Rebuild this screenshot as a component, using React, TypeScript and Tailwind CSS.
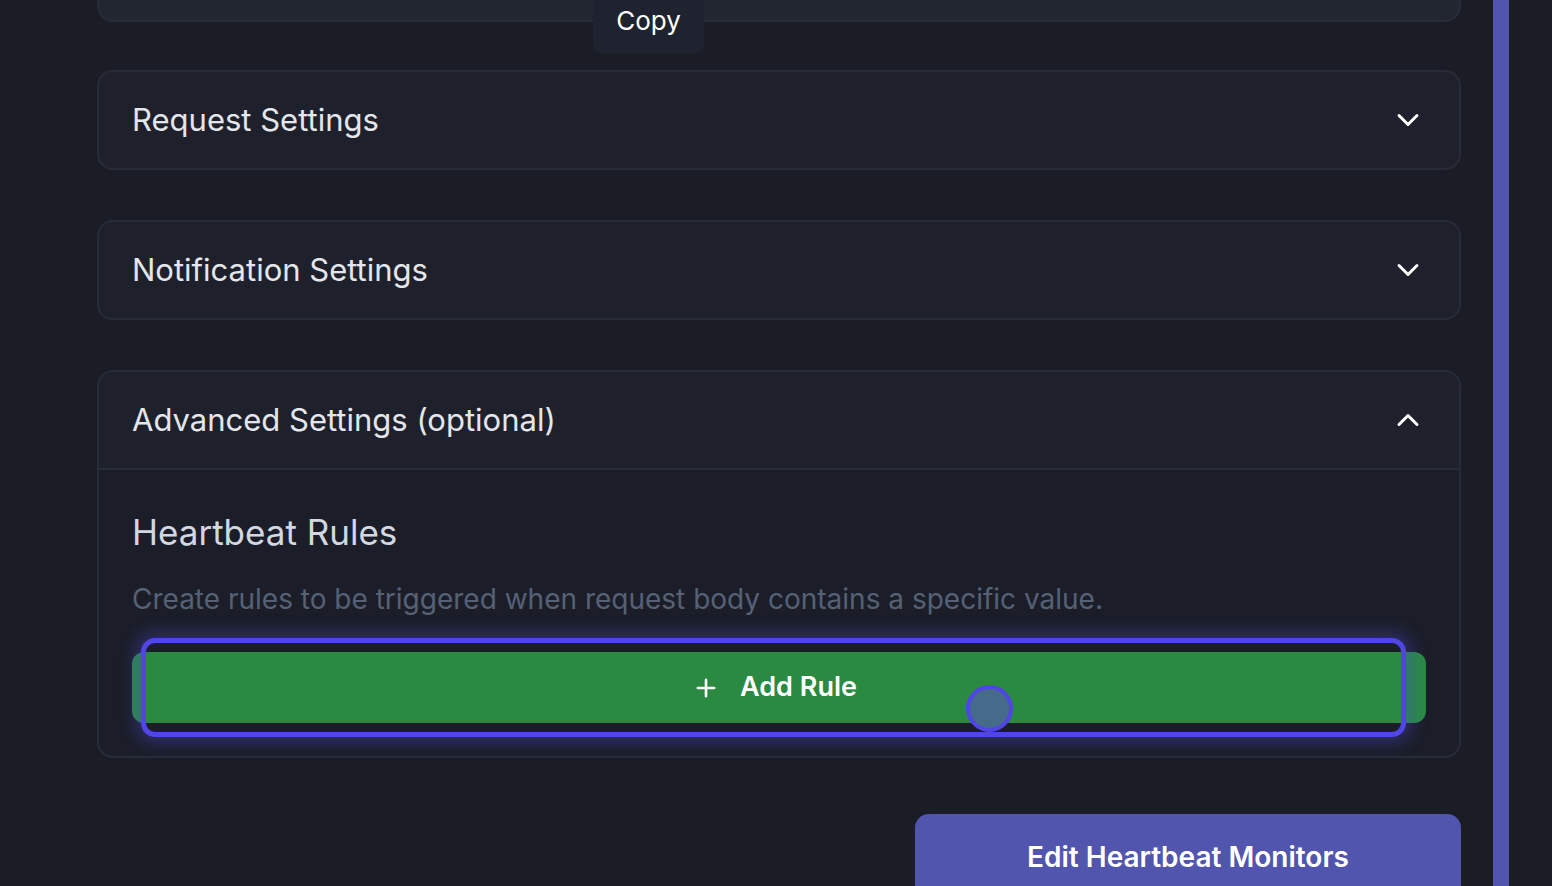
import { ChevronDown, ChevronUp, Plus } from 'lucide-react'

function Section({ title }: { title: string }) {
  return (
    <div className="flex h-[100px] shrink-0 items-center justify-between rounded-2xl border-2 border-[#282c37] bg-[#1e212b] pl-[33px] pr-[33px]">
      <span className="text-[31px] text-[#e4e6eb]">{title}</span>
      <ChevronDown className="h-9 w-9 text-white" strokeWidth={2} />
    </div>
  )
}

export default function App() {
  return (
    <div
      className="flex h-[886px] w-full overflow-hidden bg-[#1a1d26]"
      style={{ fontFamily: 'Inter, "Noto Sans", sans-serif' }}
    >
      <div className="relative ml-[97px] flex w-[1364px] shrink-0 flex-col">
        {/* card cut off at top */}
        <div className="h-[22px] shrink-0 rounded-b-2xl border-2 border-t-0 border-[#282c37] bg-[#222630]" />

        {/* copy tooltip */}
        <div className="absolute left-[496px] top-0 flex h-[53px] w-[111px] items-center justify-center rounded-b-lg bg-[#1f2330] pb-[12px] text-[26px] text-white">
          Copy
        </div>

        <div className="mt-[48px] flex shrink-0 flex-col gap-[50px]">
          <Section title="Request Settings" />
          <Section title="Notification Settings" />

          <div className="shrink-0 rounded-2xl border-2 border-[#282c37] bg-[#1e212b]">
            <div className="flex h-[98px] items-center justify-between border-b-2 border-[#282c37] pl-[33px] pr-[33px]">
              <span className="text-[31px] text-[#e4e6eb]">Advanced Settings (optional)</span>
              <ChevronUp className="h-9 w-9 text-white" strokeWidth={2} />
            </div>
            <div className="rounded-b-2xl bg-[#1b1e28] px-[33px] pb-[33px] pt-[40px]">
              <div className="text-[35px] leading-[44px] text-[#d3d8e0]">Heartbeat Rules</div>
              <div className="mt-[27px] text-[28px] leading-[36px] text-[#566175]">
                Create rules to be triggered when request body contains a specific value.
              </div>
              <div className="relative mt-[35px]">
                <button className="flex h-[71px] w-full items-center justify-center gap-[20px] rounded-xl bg-[#2a8a42] pr-[9px] text-[27px] font-semibold text-white">
                  <Plus className="h-7 w-7" strokeWidth={2.2} />
                  Add Rule
                </button>
                {/* focus ring */}
                <div className="pointer-events-none absolute left-[9px] top-[-14px] h-[99px] w-[1265px] rounded-[14px] border-[5px] border-[#4f46e5] shadow-[0_0_18px_4px_rgba(79,70,229,0.45)]" />
                {/* cursor dot */}
                <div className="pointer-events-none absolute left-[834px] top-[33px] h-[47px] w-[47px] rounded-full border-[4px] border-[#4f46e5] bg-[#466a8a]" />
              </div>
            </div>
          </div>
        </div>

        <div className="mt-[56px] flex shrink-0 justify-end">
          <button className="h-[90px] w-[546px] rounded-t-[14px] bg-[#5155ad] pb-[5px] text-[28px] font-semibold text-white">
            Edit Heartbeat Monitors
          </button>
        </div>
      </div>

      <div className="ml-[32px] h-full w-[16px] shrink-0 bg-[#5155ad]" />
    </div>
  )
}
